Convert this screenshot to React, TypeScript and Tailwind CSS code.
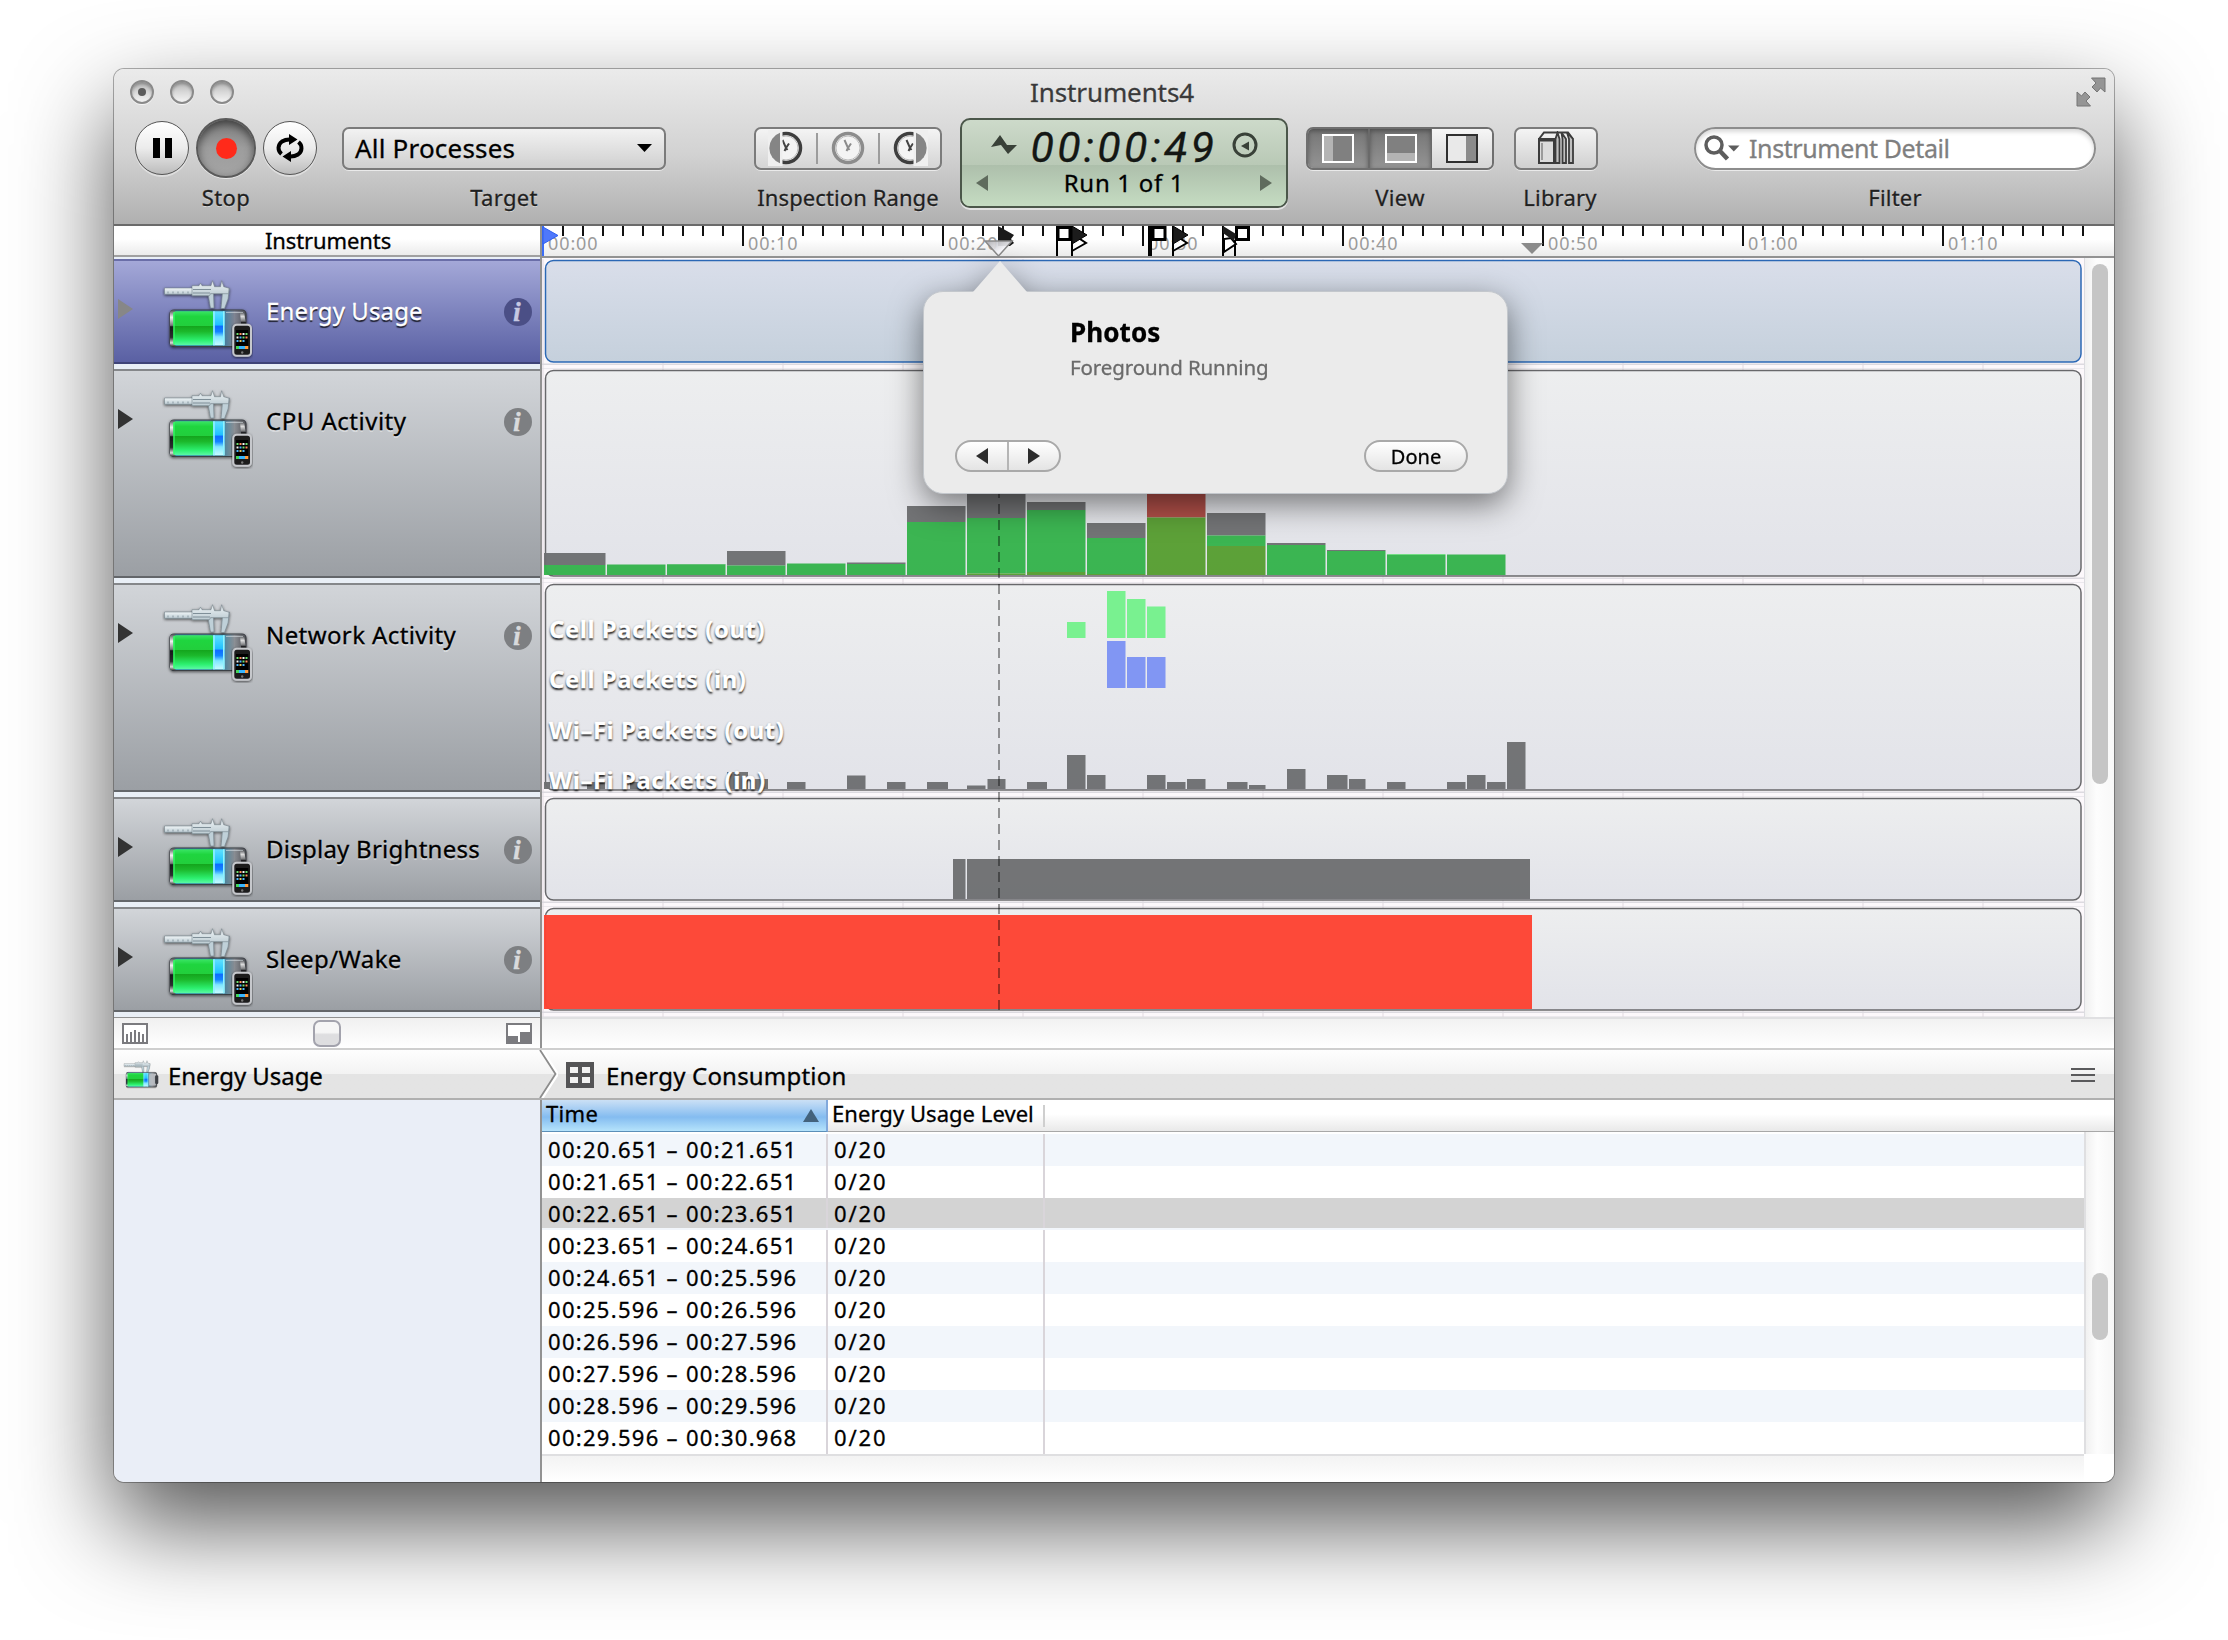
import React from "react";

type Lane = { name: string; height: number; tracking: string; selected?: boolean };

const LANES: Lane[] = [
  { name: "Energy Usage", height: 110, tracking: "tracking-[0.1px]", selected: true },
  { name: "CPU Activity", height: 214, tracking: "tracking-[0.5px]" },
  { name: "Network Activity", height: 214, tracking: "tracking-[0.4px]" },
  { name: "Display Brightness", height: 110, tracking: "tracking-[0.25px]" },
  { name: "Sleep/Wake", height: 110, tracking: "tracking-[0.4px]" },
];

type Bar = [x: number, width: number, height: number, color: string, base?: number];

const GREEN = "#36b34c";
const GRAY = "#6e6f72";
const OLIVE = "#589e32";

// Stacked samples, one every three seconds: [total, total colour, user, system]
const CPU: [number, string, number, number][] = [
  [22, GRAY, 10, 0],
  [10.5, GREEN, 10, 0],
  [11, GREEN, 10.5, 0],
  [24, GRAY, 9.5, 0],
  [11.5, GREEN, 11, 0],
  [12.5, GRAY, 11, 0],
  [69, GRAY, 53, 0],
  [86, GRAY, 57, 1.5],
  [73, GRAY, 65, 3],
  [52, GRAY, 37, 1],
  [90, "#b04a43", 57.5, 57.5],
  [62, GRAY, 39.5, 29],
  [32, GRAY, 30, 0],
  [25, GRAY, 24, 0],
  [21, "#6fdc80", 20, 0],
  [20.5, GREEN, 20, 0],
];

const CPU_BARS: Bar[] = CPU.flatMap(([total, color, user, system], i) => {
  const x = i === 0 ? 2 : 5 + 60 * i;
  const w = i === 0 ? 61.5 : 58.5;
  const out: Bar[] = [
    [x, w, total - user, color, user],
    [x, w, user - system, GREEN, system],
  ];
  if (system > 0) out.push([x, w, system, OLIVE]);
  return out;
});

const LG = "#75f18c";
const BL = "#7d93f3";
const NETWORK_BARS: Bar[] = [
  [525, 18.5, 16, LG, 151],
  [565, 18.5, 47, LG, 151],
  [585, 18.5, 39, LG, 151],
  [605, 18.5, 31.5, LG, 151],
  [565, 18.5, 47, BL, 101],
  [585, 18.5, 31, BL, 101],
  [605, 18.5, 31, BL, 101],
  [2, 6, 7, GRAY],
  [45, 18, 7, GRAY],
  [88, 18, 7, GRAY],
  [185, 21, 17, GRAY],
  [208, 18, 10, GRAY],
  [245, 18.5, 7, GRAY],
  [305, 18.5, 13.5, GRAY],
  [345, 18.5, 7, GRAY],
  [385, 21, 7, GRAY],
  [425, 18.5, 3.5, GRAY],
  [445.5, 18, 10, GRAY],
  [485, 20, 7, GRAY],
  [525, 18.5, 34, GRAY],
  [545, 18.5, 14, GRAY],
  [605, 18.5, 14, GRAY],
  [625, 18.5, 7, GRAY],
  [645, 18.5, 10, GRAY],
  [685, 20.5, 7, GRAY],
  [707, 16.5, 4, GRAY],
  [745, 18.5, 20, GRAY],
  [785, 20.5, 14, GRAY],
  [807, 16.5, 10, GRAY],
  [845, 18.5, 7, GRAY],
  [905, 18.5, 7, GRAY],
  [925, 18.5, 14, GRAY],
  [945, 18.5, 7, GRAY],
  [965, 18.5, 47, GRAY],
];

const LANE_BARS: Record<string, Bar[]> = {
  "CPU Activity": CPU_BARS,
  "Network Activity": NETWORK_BARS,
  "Display Brightness": [
    [411, 12.5, 40, GRAY],
    [425, 563, 40, GRAY],
  ],
  "Sleep/Wake": [[2, 988, 94, "#fd4333"]],
};

const ROWS = [
  "00:20.651 – 00:21.651",
  "00:21.651 – 00:22.651",
  "00:22.651 – 00:23.651",
  "00:23.651 – 00:24.651",
  "00:24.651 – 00:25.596",
  "00:25.596 – 00:26.596",
  "00:26.596 – 00:27.596",
  "00:27.596 – 00:28.596",
  "00:28.596 – 00:29.596",
  "00:29.596 – 00:30.968",
];

function InstrumentIcon({ phone = true, className }: { phone?: boolean; className: string }) {
  return (
    <svg viewBox="0 0 92 80" className={className}>
      <defs>
        <linearGradient id="cell" x1="0" y1="0" x2="0" y2="1">
          <stop offset="0" stopColor="#3ae565" />
          <stop offset=".15" stopColor="#1fd53f" />
          <stop offset=".42" stopColor="#22cf3c" />
          <stop offset=".44" stopColor="#14a51d" />
          <stop offset=".6" stopColor="#1cb92c" />
          <stop offset=".85" stopColor="#2cf06f" />
          <stop offset="1" stopColor="#5cf9a8" />
        </linearGradient>
        <linearGradient id="charge" x1="0" y1="0" x2="0" y2="1">
          <stop offset="0" stopColor="#5fe0ff" />
          <stop offset=".4" stopColor="#1fc0ff" />
          <stop offset=".44" stopColor="#0f6bff" />
          <stop offset=".6" stopColor="#1385ff" />
          <stop offset=".75" stopColor="#7fe6ff" />
          <stop offset="1" stopColor="#c8fbff" />
        </linearGradient>
        <linearGradient id="glass" x1="0" y1="0" x2="1" y2="0">
          <stop offset="0" stopColor="#1d87b5" stopOpacity=".85" />
          <stop offset=".7" stopColor="#3a86a8" stopOpacity=".75" />
          <stop offset=".85" stopColor="#8c9096" stopOpacity=".7" />
          <stop offset="1" stopColor="#4a4c51" stopOpacity=".9" />
        </linearGradient>
        <linearGradient id="cap" x1="0" y1="0" x2="0" y2="1">
          <stop offset="0" stopColor="#4a4c50" />
          <stop offset=".2" stopColor="#f2f2f2" />
          <stop offset=".42" stopColor="#77797c" />
          <stop offset=".46" stopColor="#17181a" />
          <stop offset=".75" stopColor="#2b2d30" />
          <stop offset=".9" stopColor="#dcdcdc" />
          <stop offset="1" stopColor="#333" />
        </linearGradient>
        <linearGradient id="steel" x1="0" y1="0" x2="0" y2="1">
          <stop offset="0" stopColor="#f0f5f7" />
          <stop offset="1" stopColor="#bccbd2" />
        </linearGradient>
        <filter id="soft" x="-10%" y="-10%" width="120%" height="120%">
          <feDropShadow dx="0" dy="1" stdDeviation="1.5" floodColor="#000" floodOpacity=".65" />
        </filter>
      </defs>
      <g filter="url(#soft)">
        <rect x="8" y="31" width="76" height="36.5" rx="4" fill="url(#glass)" stroke="#3b3f45" strokeWidth="1.2" />
        <rect x="8" y="31" width="6" height="36.5" rx="3" fill="url(#cap)" />
        <path d="M78 33l4 0 2 12 3 4v6h-7z" fill="url(#cap)" opacity=".85" />
      </g>
      <g filter="url(#soft)" stroke="#66747c" strokeWidth=".5">
        <path d="M2.5 9h28v6.300h-28z" fill="url(#steel)" />
        <path d="M46 14.500l2.500 14.500h3.500l-.5-15zM67.500 9l-1.500 11-3.500 9.500h-3.500l1.500-16z" fill="#bfd0d8" />
        <path d="M30 6.700h7l1.500-2.500 1.500 2.500h9l1.500-5 2 6h6l1.200-6 2 6 5.300 1.500-.5 5.500h-18l-1 2h-17.500z" fill="url(#steel)" />
        <path d="M31 10.500h18M31 14h17" stroke="#7f8f98" strokeWidth="1" />
      </g>
      <path d="M6 12.500v2M11 12.500v2M16 12.500v2M21 12.500v2M26 12.500v2" stroke="#8797a0" strokeWidth="1" />
      <rect x="11.300" y="32.300" width="41" height="34" rx="3" fill="url(#cell)" />
      <rect x="51" y="32.300" width="11.500" height="34" fill="url(#charge)" />
      <path d="M52 32.300v34M61.800 32.300v34" stroke="#8ff2ff" strokeWidth="1.600" />
      <path d="M12 33v32.500" stroke="#34ff6a" strokeWidth="1.200" />
      <path d="M64 33.500h17" stroke="#d5dde2" strokeWidth="1" opacity=".6" />
      {phone ? (
        <g>
          <rect x="71.300" y="45.700" width="17.700" height="31" rx="3.500" fill="#1a1a1c" stroke="#c6c8cc" strokeWidth="2" filter="url(#soft)" />
          <rect x="74" y="51" width="12.300" height="19" fill="#000" />
          <path d="M74.500 55h2M80.500 58.500h2M83.500 55h2" stroke="#6fe06f" strokeWidth="1.800" />
          <path d="M77.500 55h2M83.500 58.500h2" stroke="#ff8d5c" strokeWidth="1.800" />
          <path d="M80.500 55h2M74.500 58.500h2" stroke="#f5f5f5" strokeWidth="1.800" />
          <path d="M77.500 58.500h2M74.500 62h2M80.500 62h2" stroke="#4cb8ff" strokeWidth="1.800" />
          <path d="M77.500 62h2" stroke="#ffe067" strokeWidth="1.800" />
          <path d="M74 68.500h3" stroke="#43d65b" strokeWidth="3" />
          <path d="M77 68.500h6" stroke="#38b6ff" strokeWidth="3" />
          <path d="M83 68.500h3.300" stroke="#ff9a3c" strokeWidth="3" />
          <circle cx="80.200" cy="73.500" r="1.200" fill="#777" />
        </g>
      ) : (
        <>
          <rect x="65" y="35" width="17" height="29" rx="2" fill="#c3c7cc" opacity=".8" />
          <rect x="80" y="38" width="8" height="22" rx="3" fill="#3c3f44" />
        </>
      )}
    </svg>
  );
}

function TrafficLight({ dot }: { dot?: boolean }) {
  return (
    <div className="flex h-6 w-6 items-center justify-center rounded-full border-2 border-[#8a8a8a] bg-linear-to-b from-[#b5b5b5] via-[#d8d8d8] to-[#f4f4f4] shadow-[0_1px_0_rgba(255,255,255,0.7),inset_0_2px_3px_rgba(0,0,0,0.25)]">
      {dot && <div className="h-2 w-2 rounded-full bg-[#5c5c5c]" />}
    </div>
  );
}

function Labeled({ label, className, children }: { label: string; className: string; children: React.ReactNode }) {
  return (
    <div className={`flex flex-col items-center ${className}`}>
      <div className="flex h-[60px] w-full items-center">{children}</div>
      <div className="h-[39px] text-[22px] leading-[39px] text-[#1f1f1f] [text-shadow:0_1px_0_rgba(255,255,255,0.5)]">{label}</div>
    </div>
  );
}

function RoundButton({ children }: { children: React.ReactNode }) {
  return (
    <div className="flex h-[54px] w-[54px] items-center justify-center rounded-full border border-[#555] bg-linear-to-b from-white via-[#ececec] to-[#bcbcbc] shadow-[0_2px_0_rgba(255,255,255,0.4)]">
      {children}
    </div>
  );
}

function ClockIcon({ kind }: { kind: "left" | "none" | "right" }) {
  const dim = kind === "none";
  const ring = dim ? "#8c8c8c" : "#3e3e3e";
  return (
    <svg viewBox="0 0 36 36" className="h-9 w-9">
      <circle cx="18" cy="18" r="14.500" fill="#f4f4f4" stroke={ring} strokeWidth="3.500" />
      <circle cx="18" cy="18" r="12" fill="none" stroke="#bdbdbd" strokeWidth="1" />
      <path d="M14.500 10l3.500 8 3-4.500M18 18l-1.500 3M18 18l1.500 2" fill="none" stroke={dim ? "#8c8c8c" : "#444"} strokeWidth="2" />
      {kind === "left" && (
        <>
          <path d="M0 0h14.500v36h-14.500z" fill="#efefef" />
          <path d="M12 2.700a16.300 16.300 0 0 0 0 30.600z" fill="#858585" />
        </>
      )}
      {kind === "right" && (
        <>
          <path d="M21.500 0h14.500v36h-14.500z" fill="#efefef" />
          <path d="M24 2.700a16.300 16.300 0 0 1 0 30.600z" fill="#858585" />
        </>
      )}
    </svg>
  );
}

function Toolbar() {
  return (
    <header className="h-[157px] border-b-2 border-[#6a6a6a] bg-linear-to-b from-[#ebebeb] via-[#d2d2d2] via-55% to-[#b0b0b0]">
      <div className="grid h-[49px] grid-cols-[1fr_auto_1fr] pr-2 pl-4">
        <div className="flex h-[46px] items-center gap-4">
          <TrafficLight dot />
          <TrafficLight />
          <TrafficLight />
        </div>
        <div className="mr-[12px] h-[46px] text-[26px] leading-[46px] tracking-[-0.1px] text-[#3a3a3a] [text-shadow:0_1px_0_rgba(255,255,255,0.6)]">Instruments4</div>
        <div className="flex h-[46px] items-center justify-end">
          <svg viewBox="0 0 30 30" className="h-[30px] w-[30px]">
            <path d="M29 1v14l-4.500-4-3.500 4-5-5 4-4-4.500-5zM1 29v-14l4.500 4 3.500-4 5 5-4 4 4.500 5z" fill="#959595" stroke="#757575" strokeWidth="1" />
          </svg>
        </div>
      </div>
      <div className="flex items-start pl-[21px]">
        <Labeled label="Stop" className="w-[182px] tracking-[0.4px]">
          <RoundButton>
            <div className="flex gap-[5px]">
              <div className="h-5 w-[7px] bg-black" />
              <div className="h-5 w-[7px] bg-black" />
            </div>
          </RoundButton>
          <div className="mx-[7px] flex h-[60px] w-[60px] items-center justify-center rounded-full border-2 border-[#5a5a5a] bg-linear-to-b from-[#7d7d7d] via-[#9d9d9d] to-[#a4a4a4] shadow-[0_1px_0_rgba(255,255,255,0.6),inset_0_4px_8px_rgba(0,0,0,0.5)]">
            <div className="h-[21px] w-[21px] rounded-full bg-[#ff2a1a]" />
          </div>
          <RoundButton>
            <svg viewBox="0 0 28 28" className="h-7 w-7">
              <g fill="none" stroke="#000" strokeWidth="4">
                <path d="M5.500 20A10 8.500 0 0 1 6 7.500Q10 5 15 5.500" />
                <path d="M22.500 8A10 8.500 0 0 1 22 20.500Q18 23 13 22.500" />
              </g>
              <path d="M13 0l8.500 5.500-8.500 5.500zM15 17v11l-8.500-5.500z" />
            </svg>
          </RoundButton>
        </Labeled>

        <Labeled label="Target" className="ml-[25px] w-[324px] tracking-[0.3px]">
          <div className="flex h-[43px] w-full items-center justify-between rounded-[7px] border-2 border-[#7b7b7b] bg-linear-to-b from-[#f2f2f2] to-[#d0d0d0] pr-[12px] pl-[11px] shadow-[0_1px_0_rgba(255,255,255,0.6)]">
            <span className="text-[26px] leading-[42px] tracking-[0.2px] text-black">All Processes</span>
            <svg viewBox="0 0 15 8" className="mb-px h-2 w-[15px]">
              <path d="M0 0h15l-7.500 8z" />
            </svg>
          </div>
        </Labeled>

        <Labeled label="Inspection Range" className="ml-[88px] w-[188px] tracking-[0.1px]">
          <div className="flex h-[43px] w-full items-center rounded-[7px] border-2 border-[#7b7b7b] bg-linear-to-b from-[#f4f4f4] to-[#d4d4d4] shadow-[0_1px_0_rgba(255,255,255,0.6)]">
            <div className="flex w-[61px] justify-center">
              <ClockIcon kind="left" />
            </div>
            <div className="h-[31px] w-0.5 bg-[#9c9c9c]" />
            <div className="flex w-[60px] justify-center">
              <ClockIcon kind="none" />
            </div>
            <div className="h-[31px] w-0.5 bg-[#9c9c9c]" />
            <div className="flex w-[61px] justify-center">
              <ClockIcon kind="right" />
            </div>
          </div>
        </Labeled>

        <div className="ml-[18px] h-[90px] w-[328px] overflow-hidden rounded-[10px] border-2 border-[#4b574a] bg-linear-to-b from-[#cddaca] via-[#b9c9b6] via-52% to-[#c3dac0] shadow-[0_2px_0_rgba(255,255,255,0.6)]">
          <div className="flex h-[45px] items-center justify-center">
            <svg viewBox="0 0 26 20" className="mt-[5px] h-5 w-[26px]">
              <path d="M0 12l9-12 7 10h10l-9 9-7-9z" fill="#394138" />
            </svg>
            <div className="ml-[14px] h-[45px] w-[196px] text-[43px] leading-[54px] tracking-[3.2px] whitespace-nowrap text-[#141714] italic font-['Roboto',sans-serif]">00:00:49</div>
            <svg viewBox="0 0 26 26" className="mt-[4px] ml-[5px] h-[26px] w-[26px]">
              <circle cx="13" cy="13" r="11" fill="none" stroke="#394138" strokeWidth="3" />
              <path d="M9 14l8-4.500v9z" fill="#394138" />
            </svg>
          </div>
          <div className="flex h-[41px] items-center justify-between bg-linear-to-b from-[#adbfab] to-[#c5dcc2] px-[14px] pb-1.5">
            <svg viewBox="0 0 12 16" className="h-4 w-3">
              <path d="M12 0v16l-12-8z" fill="#5f6b5d" />
            </svg>
            <span className="text-[24px] leading-[35px] tracking-[0.7px] text-black">Run 1 of 1</span>
            <svg viewBox="0 0 12 16" className="h-4 w-3">
              <path d="M0 0v16l12-8z" fill="#5f6b5d" />
            </svg>
          </div>
        </div>

        <Labeled label="View" className="ml-[18px] w-[188px] tracking-[0.4px]">
          <div className="flex h-[43px] w-full overflow-hidden rounded-[7px] border-2 border-[#6f6f6f] shadow-[0_1px_0_rgba(255,255,255,0.6)]">
            <div className="flex w-[62px] items-center justify-center border-r-2 border-[#6a6a6a] bg-linear-to-b from-[#767676] to-[#949494] shadow-[inset_0_2px_5px_rgba(0,0,0,0.35)]">
              <svg viewBox="0 0 32 29" className="h-[29px] w-8">
                <path d="M1 1h30v27h-30z" fill="#808080" stroke="#fff" strokeWidth="2" />
                <path d="M2 2h9v25h-9z" fill="#b4b4b4" />
              </svg>
            </div>
            <div className="flex w-[62px] items-center justify-center border-r border-[#6a6a6a] bg-linear-to-b from-[#767676] to-[#949494] shadow-[inset_0_2px_5px_rgba(0,0,0,0.35)]">
              <svg viewBox="0 0 32 29" className="h-[29px] w-8">
                <path d="M1 1h30v27h-30z" fill="#808080" stroke="#fff" strokeWidth="2" />
                <path d="M2 19h28v8h-28z" fill="#b4b4b4" />
              </svg>
            </div>
            <div className="flex flex-1 items-center justify-center bg-linear-to-b from-[#f6f6f6] to-[#d6d6d6]">
              <svg viewBox="0 0 32 29" className="h-[29px] w-8">
                <path d="M1 1h30v27h-30z" fill="#e9e9e9" stroke="#2f2f2f" strokeWidth="2" />
                <path d="M20 2h10v25h-10z" fill="#8b8b8b" />
              </svg>
            </div>
          </div>
        </Labeled>

        <Labeled label="Library" className="ml-[20px] w-[92px] tracking-[0.2px]">
          <div className="flex h-[43px] w-[84px] items-center justify-center rounded-[7px] border-2 border-[#7b7b7b] bg-linear-to-b from-[#f4f4f4] to-[#d0d0d0] shadow-[0_1px_0_rgba(255,255,255,0.6)]">
            <svg viewBox="0 0 38 34" className="h-[34px] w-[38px]" fill="none" stroke="#3c3c3c" strokeWidth="2">
              <path d="M2 8l5-6.500h24l5 6.500" />
              <path d="M2 8h15v24h-15z" fill="#dcdcdc" />
              <path d="M2 9h15" strokeWidth="3" />
              <path d="M5 12v17" stroke="#9a9a9a" />
              <path d="M18.500 8v24h4v-24l-2-6.500zM25.500 8v24h3.500v-24l-4.500-6.500zM32 8v24h4v-24l-6-6.500z" fill="#c0c0c0" strokeWidth="1.800" />
            </svg>
          </div>
        </Labeled>

        <Labeled label="Filter" className="ml-[88px] w-[402px] tracking-[0.2px]">
          <div className="flex h-[43px] w-full items-center rounded-full border-2 border-[#8d8d8d] bg-white pl-[8px] shadow-[0_1px_0_rgba(255,255,255,0.6),inset_0_3px_4px_rgba(0,0,0,0.15)]">
            <svg viewBox="0 0 38 26" className="h-[26px] w-[38px]">
              <circle cx="10" cy="10" r="8" fill="none" stroke="#5d5d5d" strokeWidth="3.500" />
              <path d="M15.500 15.500l8 8.500" stroke="#5d5d5d" strokeWidth="4.500" />
              <path d="M24 10.500h11.500l-5.700 6z" fill="#5d5d5d" />
            </svg>
            <span className="ml-[7px] text-[25px] leading-[41px] tracking-[-0.4px] text-[#7f7f7f]">Instrument Detail</span>
          </div>
        </Labeled>
      </div>
    </header>
  );
}

function LaneHeader({ lane }: { lane: Lane }) {
  const tall = lane.height > 150;
  const tone = lane.selected
    ? "border-t-[#6a6ea8] border-b-[#3f4478] from-[#a4a8d8] to-[#5a60a3]"
    : "border-t-[#85878a] border-b-[#63666a] from-[#d2d5d9] to-[#9b9fa4]";
  return (
    <div className={tall ? "h-[214px] bg-[#e9eff6] pb-[5px]" : "h-[110px] bg-[#e9eff6] pb-[5px]"}>
      <div className={`flex h-full items-start border-t-2 border-b-2 bg-linear-to-b ${tone}`}>
        <svg viewBox="0 0 15 20" className="mt-[38px] ml-1 h-5 w-[15px]">
          <path d="M0 0v20l15-10z" fill={lane.selected ? "#878787" : "#333"} />
        </svg>
        <InstrumentIcon className="mt-[18px] ml-[29px] h-20 w-[92px]" />
        <div
          className={`ml-[12px] flex-1 pt-[30px] text-[24px] leading-10 ${lane.tracking} ${
            lane.selected ? "text-white [text-shadow:0_2px_1px_rgba(0,0,0,0.75)]" : "text-black [text-shadow:0_2px_0_rgba(255,255,255,0.4)]"
          }`}
        >
          {lane.name}
        </div>
        <div
          className={`mt-[37px] mr-[8px] flex h-[28px] w-[28px] items-center justify-center rounded-full text-[28px] leading-[28px] font-bold italic font-['Liberation_Serif',serif] ${
            lane.selected ? "bg-[#4b4f86] text-[#c6c8e2]" : "bg-[#7d7f82] text-[#d9dadc]"
          }`}
        >
          <span className="mr-0.5">i</span>
        </div>
      </div>
    </div>
  );
}

function LaneTrack({ lane }: { lane: Lane }) {
  const h = lane.height;
  const base = h - 8;
  const gridlines = Array.from({ length: 13 }, (_, i) => i * 120);
  const size = h > 150 ? "block h-[214px] w-[1542px]" : "block h-[110px] w-[1542px]";
  return (
    <svg viewBox={`0 0 1542 ${h}`} className={size}>
      <defs>
        <linearGradient id={`lane-${h}-${lane.selected ? 1 : 0}`} x1="0" y1="0" x2="0" y2="1">
          <stop offset="0" stopColor={lane.selected ? "#d9deea" : "#edeeef"} />
          <stop offset="1" stopColor={lane.selected ? "#c5d0dc" : "#e2e3e9"} />
        </linearGradient>
      </defs>
      <rect width="1542" height={h} fill="#fcf8fb" />
      {gridlines.map((x) => (
        <rect key={x} x={x} y="0" width="2" height={h} fill="#efe9ee" />
      ))}
      <rect y={h - 5.5} width="1542" height="1.500" fill="#dcdae0" />
      <rect y={h - 0.5} width="1542" height="1" fill="#dcdae0" />
      <rect
        x="3.500"
        y="1.500"
        width="1535.500"
        height={h - 8.5}
        rx="8"
        fill={`url(#lane-${h}-${lane.selected ? 1 : 0})`}
        stroke={lane.selected ? "#2b68b5" : "#68686b"}
        strokeWidth="1.500"
      />
      {(LANE_BARS[lane.name] ?? []).map(([x, w, bh, color, off = 0], i) => (
        <rect key={i} x={x} y={base - off - bh} width={w} height={bh} fill={color} fillOpacity=".97" />
      ))}
    </svg>
  );
}

function Ruler() {
  return (
    <svg viewBox="0 0 1572 32" className="block h-8 w-[1572px]">
      <defs>
        <linearGradient id="knob" x1="0" y1="0" x2="1" y2="1">
          <stop offset="0" stopColor="#a9a9ad" />
          <stop offset=".6" stopColor="#f7f7fb" />
        </linearGradient>
      </defs>
      {Array.from({ length: 78 }, (_, s) => (
        <rect key={s} x={s * 20} y="0" width="2" height={s % 10 === 0 ? 20 : 10} fill="#111" />
      ))}
      {["00:00", "00:10", "00:20", "00:30", "00:40", "00:50", "01:00", "01:10"].map((t, i) => (
        <text key={t} x={i * 200 + 6} y="24" fontSize="18" letterSpacing="0.9" fill="#9b9b9b">
          {t}
        </text>
      ))}
      <path d="M0 0h2v30h-2z" fill="#3c6cf5" />
      <path d="M1 1v17l15-8.500z" fill="#4f78fb" stroke="#2f5ff0" strokeWidth="1" />
      <path d="M979 17h22l-11 11z" fill="#8b8b8b" />

      <path d="M456 0l16 9-3 4 3 4-4 3h-12z" fill="#1a1a1a" />
      <path d="M443 15h27l-13.500 15z" fill="url(#knob)" stroke="#8a8a8a" strokeWidth="1.500" fillOpacity=".92" />

      <path d="M515 0v30M530 0v30M631 0v30M681 0v30M693 14v16" stroke="#000" strokeWidth="2" />
      <path d="M608 0v30" stroke="#000" strokeWidth="4" />
      <g fill="#fff" stroke="#000" strokeWidth="3">
        <path d="M516 1.500h12v12h-12z" />
        <path d="M611 1.500h12v12h-12z" />
        <path d="M694.500 1.500h12v12h-12z" />
      </g>
      <g fill="#fff" stroke="#000" strokeWidth="2">
        <path d="M530 25l14-8-6-4M631 25l14-8-6-4" />
        <path d="M682 13v13l12-8-5-6z" />
      </g>
      <path d="M530 0v18l15-9zM631 0v18l15-9z" fill="#1c1c1c" stroke="#000" strokeWidth="1" />
      <path d="M681 0l13 8-2 7-11-8z" fill="#1c1c1c" />
    </svg>
  );
}

function Popover() {
  return (
    <div className="absolute top-[192px] left-[809px] w-[585px] pt-[30px] drop-shadow-[0_10px_16px_rgba(0,0,0,0.5)]">
      <svg viewBox="0 0 54 31" className="absolute top-0 left-[50px] h-[31px] w-[54px]">
        <path d="M0 31l27-31 27 31z" fill="#ebebeb" />
      </svg>
      <div className="flex h-[203px] flex-col justify-between rounded-[20px] border border-[#c3c7cc] bg-[#ebebeb]">
        <div className="pt-[22px] pl-[146px]">
          <div className="text-[26px] leading-9 font-bold tracking-[0.1px] text-black">Photos</div>
          <div className="pt-px text-[20.5px] leading-8 tracking-[-0.1px] text-[#6a6a6a]">Foreground Running</div>
        </div>
        <div className="flex items-center justify-between pr-[39px] pb-[21px] pl-[31px]">
          <div className="flex h-8 w-[106px] items-center rounded-full border-2 border-[#a9a9a9] bg-linear-to-b from-white to-[#e4e4e4]">
            <div className="flex flex-1 justify-center">
              <svg viewBox="0 0 12 16" className="h-4 w-3">
                <path d="M12 0v16l-12-8z" fill="#2c2c2c" />
              </svg>
            </div>
            <div className="h-7 w-0.5 bg-[#b5b5b5]" />
            <div className="flex flex-1 justify-center">
              <svg viewBox="0 0 12 16" className="h-4 w-3">
                <path d="M0 0v16l12-8z" fill="#2c2c2c" />
              </svg>
            </div>
          </div>
          <div className="flex h-8 w-[104px] items-center justify-center rounded-full border-2 border-[#a9a9a9] bg-linear-to-b from-white to-[#e4e4e4] pt-px text-[20px] leading-7 text-black">Done</div>
        </div>
      </div>
    </div>
  );
}

function Timeline() {
  return (
    <section className="flex h-[822px]">
      <div className="w-[426px]">
        <div className="h-[31px] border-b-2 border-[#a0a0a0] bg-linear-to-b from-white via-white via-45% to-[#ebebeb] text-center text-[22px] leading-[28px] tracking-[-0.1px] text-black">
          <span className="ml-0.5">Instruments</span>
        </div>
        <div className="h-[2px] bg-[#e9eff6]" />
        {LANES.map((lane) => (
          <LaneHeader key={lane.name} lane={lane} />
        ))}
        <div className="flex h-[31px] items-center justify-between border-t border-[#909090] bg-linear-to-b from-[#f0f0f0] to-white px-[8px]">
          <svg viewBox="0 0 26 21" className="h-[21px] w-[26px]" fill="none" stroke="#7b7b7f" strokeWidth="2">
            <path d="M1 1h24v19h-24z" fill="#fff" />
            <path d="M5 20v-9M9 20v-11M13 20v-13M17 20v-11M21 20v-9" />
          </svg>
          <div className="-ml-[1px] h-[27px] w-7 rounded-[7px] border-2 border-[#a3a3ad] bg-linear-to-b from-[#f6f6f6] from-45% to-[#dedee0] to-55%" />
          <svg viewBox="0 0 26 21" className="h-[21px] w-[26px]">
            <path d="M1 1h24v19h-24z" fill="#fff" stroke="#7b7b7f" strokeWidth="2" />
            <path d="M1 13h11v7h-11zM14 9h11v11h-11z" fill="#7b7b7f" />
          </svg>
        </div>
      </div>
      <div className="w-0.5 bg-[#929292]" />
      <div className="w-[1572px]">
        <div className="h-8 border-b-2 border-[#929292] bg-linear-to-b from-white via-white via-45% to-[#ebebeb]">
          <Ruler />
        </div>
        <div className="flex">
          <div className="w-[1542px] bg-[#fcf8fb] pt-px">
            <div className="relative">
              {LANES.map((lane) => (
                <LaneTrack key={lane.name} lane={lane} />
              ))}
              <svg viewBox="0 0 2 752" className="absolute top-0 left-[456px] h-[752px] w-0.5">
                <path d="M1 5v747" stroke="#000" strokeOpacity=".38" strokeWidth="2" strokeDasharray="10 6" />
              </svg>
              <div className="absolute top-[345px] left-[7px] text-[24px] leading-[50.300px] font-bold tracking-[0.5px] whitespace-nowrap text-white [text-shadow:0_2px_2px_rgba(0,0,0,0.85),0_0_2px_rgba(0,0,0,0.25)]">
                <div>Cell Packets (out)</div>
                <div>Cell Packets (in)</div>
                <div>Wi–Fi Packets (out)</div>
                <div>Wi–Fi Packets (in)</div>
              </div>
            </div>
          </div>
          <div className="w-[30px] border-l border-[#dcdce0] bg-linear-to-r from-[#f0f0f0] via-[#fdfdfd] via-40% to-[#f8f8f8] pt-[6px] pl-[7px]">
            <div className="h-[520px] w-4 rounded-full bg-[#c5c5c5]" />
          </div>
        </div>
        <div className="h-[31px] border-t-2 border-[#e0e0e2] bg-linear-to-b from-[#f2f2f2] to-white" />
      </div>
    </section>
  );
}

function Breadcrumb() {
  return (
    <div className="flex h-[52px] items-center border-t-2 border-b-2 border-t-[#cfcfcf] border-b-[#b0b0b0] bg-linear-to-b from-[#fefefe] via-[#f3f3f3] via-49% to-[#e4e4e4] to-51% text-[24px] leading-[48px] text-black">
      <InstrumentIcon phone={false} className="mt-1 ml-[9px] h-[32px] w-[37px]" />
      <span className="ml-[8px] w-[370px] pt-[3px] tracking-[-0.05px]">Energy Usage</span>
      <svg viewBox="0 0 20 48" className="h-12 w-5" fill="none">
        <path d="M4 0l15.500 24-15.500 24" stroke="#fff" strokeWidth="3" />
        <path d="M2 0l15.500 24-15.500 24" stroke="#8c8c8c" strokeWidth="1.800" />
      </svg>
      <svg viewBox="0 0 28 26" className="mt-px ml-[8px] h-[26px] w-7">
        <path d="M0 0h28v26h-28z" fill="#545456" />
        <path d="M4 5h8v6h-8zM16 5h8v6h-8zM4 15h8v6h-8zM16 15h8v6h-8z" fill="#f2f2f2" />
      </svg>
      <span className="ml-[12px] flex-1 pt-[3px] tracking-[0.2px]">Energy Consumption</span>
      <div className="mt-0.5 mr-[19px] flex flex-col gap-1">
        <div className="h-0.5 w-6 bg-[#5a5a5c]" />
        <div className="h-0.5 w-6 bg-[#5a5a5c]" />
        <div className="h-0.5 w-6 bg-[#5a5a5c]" />
      </div>
    </div>
  );
}

function DetailTable() {
  return (
    <section className="flex h-[382px]">
      <div className="w-[426px] bg-[#eaeef7]" />
      <div className="w-0.5 bg-[#929292]" />
      <div className="w-[1572px] bg-white text-[22px] text-black">
        <div className="flex h-8 border-b border-[#a8a8a8] bg-linear-to-b from-white via-white via-45% to-[#e9e9e9]">
          <div className="flex h-8 w-[286px] items-center justify-between border-r-2 border-b border-r-[#82a9dc] border-b-[#5b8fb8] bg-linear-to-b from-[#cbe0f5] via-[#84bcf0] via-55% to-[#b5e3fb] pr-[7px] pl-[4px]">
            <span className="pb-[5px] leading-[26px] tracking-[0.3px]">Time</span>
            <svg viewBox="0 0 16 13" className="mb-px h-[13px] w-4">
              <path d="M0 13h16l-8-13z" fill="#43627c" />
            </svg>
          </div>
          <div className="flex w-[217px] items-center justify-between pl-[4px]">
            <span className="pb-[5px] leading-[26px] tracking-[0.05px] whitespace-nowrap">Energy Usage Level</span>
            <div className="h-[22px] w-0.5 bg-[#cfcfcf]" />
          </div>
        </div>
        <div className="flex">
          <div className="w-[1542px] pt-0.5">
            {ROWS.map((time, i) => (
              <div key={time} className={i % 2 === 0 ? "h-8 bg-[#f2f6fb]" : "h-8 bg-white"}>
                <div className={i === 2 ? "flex h-[30px] bg-[#d3d3d3]" : "flex h-8"}>
                  <div className="h-full w-[286px] border-r-2 border-[#d9d5da] pl-[6px] leading-[30px] tracking-[1.300px]">{time}</div>
                  <div className="h-full w-[217px] border-r-2 border-[#d9d5da] pl-[6px] leading-[30px] tracking-[1.900px]">0/20</div>
                </div>
              </div>
            ))}
          </div>
          <div className="w-[30px] border-l-2 border-[#dfdfe1] bg-linear-to-r from-[#f1f1f1] via-[#fdfdfd] via-40% to-[#f6f6f6] pt-[141px] pl-[6px]">
            <div className="h-[67px] w-4 rounded-full bg-[#c7c7c7]" />
          </div>
        </div>
        <div className="h-[28px] w-[1542px] border-t-2 border-[#dfdfe1] bg-linear-to-b from-[#f3f3f3] to-white" />
      </div>
    </section>
  );
}

export default function App() {
  return (
    <div className="h-[1640px] w-[2228px] overflow-hidden bg-white pt-[69px] pl-[114px] font-['Noto_Sans',sans-serif] [-webkit-text-stroke:0.3px]">
      <div className="relative h-[1413px] w-[2000px] rounded-[10px] shadow-[0_0_0_1px_rgba(0,0,0,0.3),0_42px_96px_rgba(0,0,0,0.68)]">
        <div className="h-full w-full overflow-hidden rounded-[10px]">
          <Toolbar />
          <Timeline />
          <Breadcrumb />
          <DetailTable />
        </div>
        <Popover />
      </div>
    </div>
  );
}
